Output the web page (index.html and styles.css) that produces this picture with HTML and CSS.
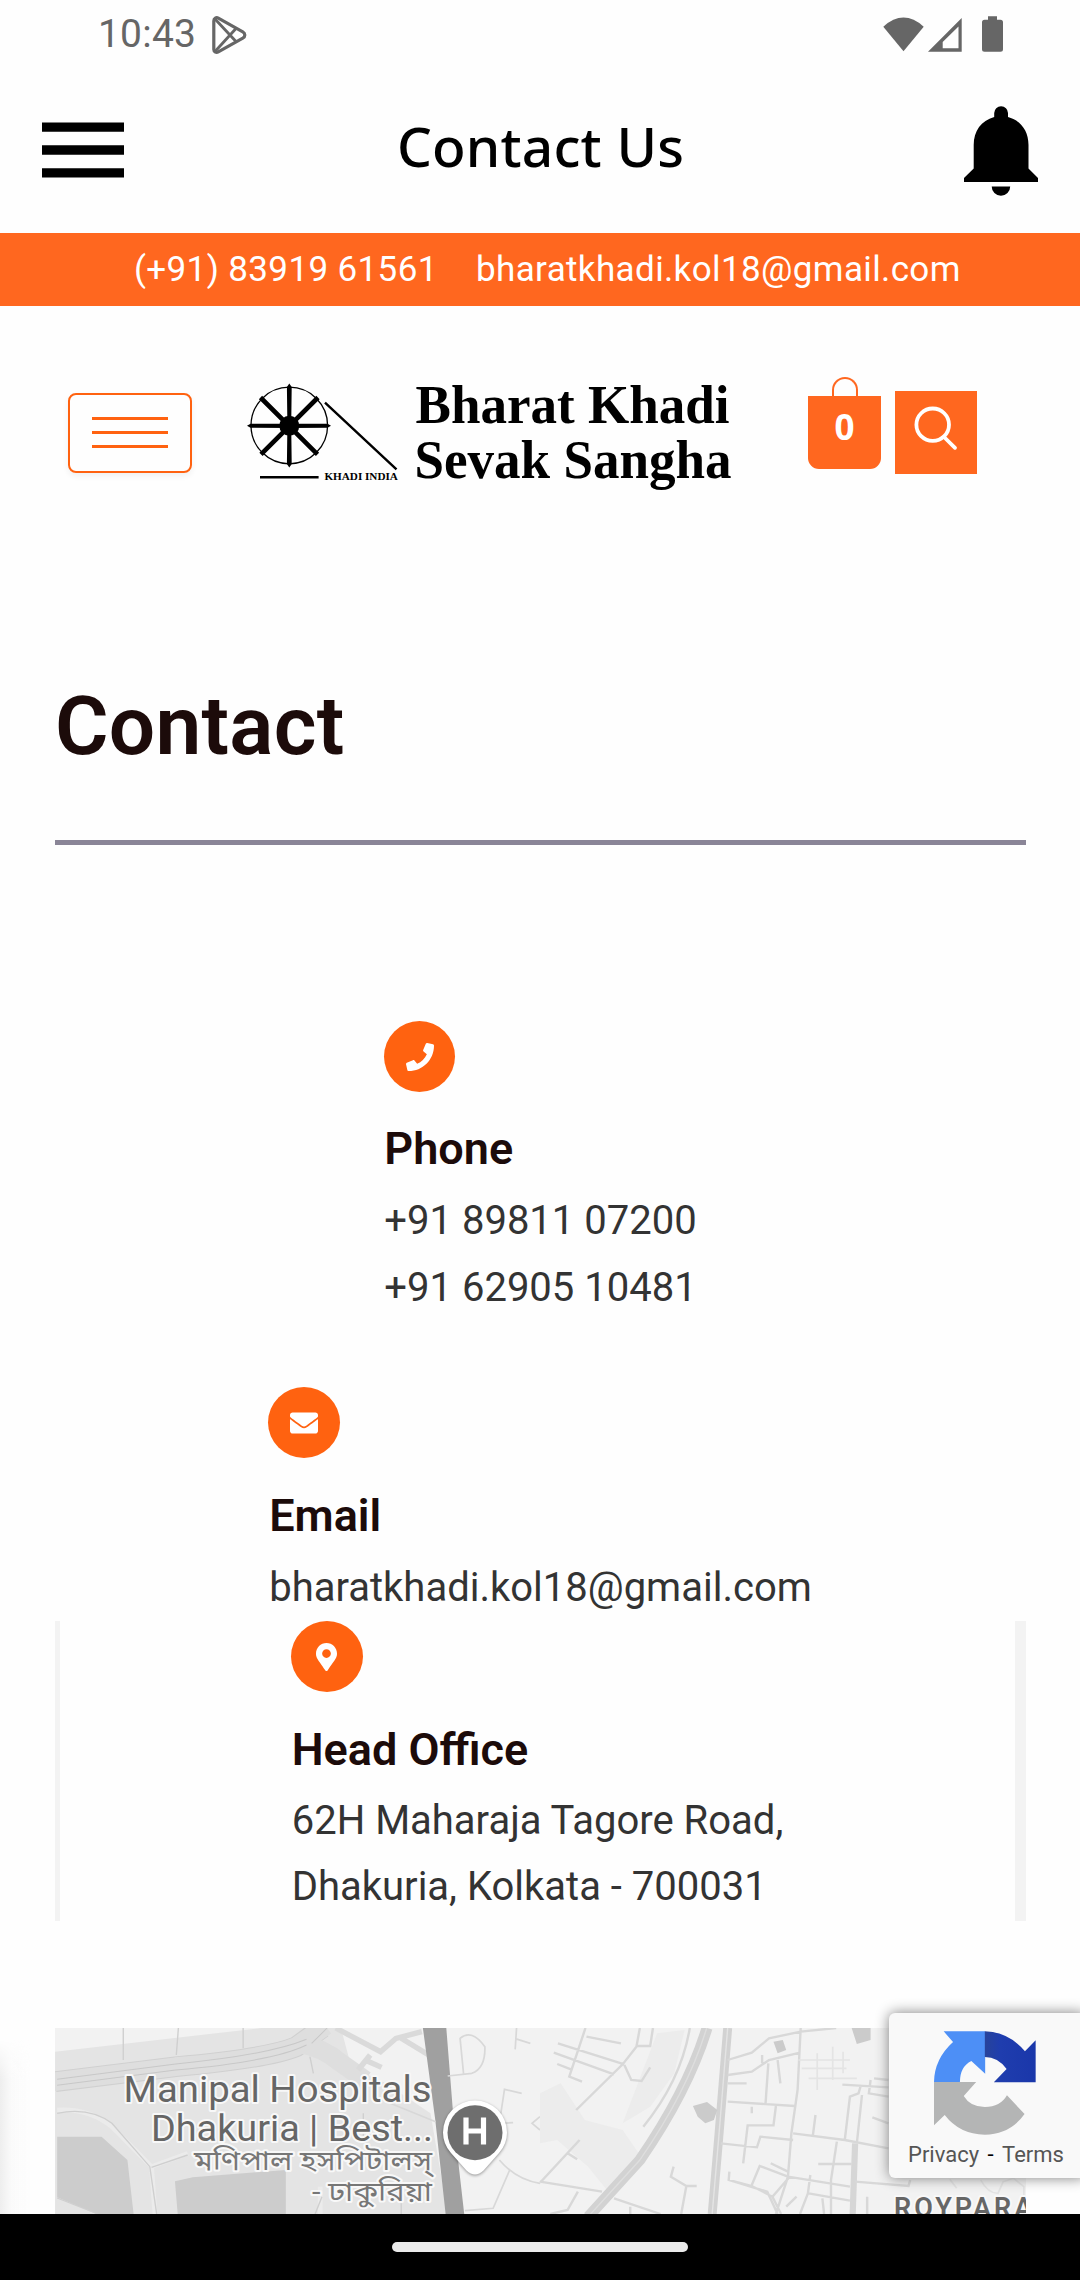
FILE: index.html
```html
<!DOCTYPE html>
<html lang="en">
<head>
<meta charset="utf-8">
<title>Contact Us</title>
<link rel="stylesheet" href="styles.css">
</head>
<body>
<div class="screen">
  <div class="status">
    <span class="time">10:43</span>
    <svg class="play" viewBox="212 16 35 38"><g fill="none" stroke="#666" stroke-width="3.2" stroke-linejoin="round"><path d="M213.800 21v28.500c0 2.500 2.500 3.500 4.500 2.400l24.500-13.700c2.700-1.600 2.700-4.800 0-6.400l-24.500-13.700c-2-1.100-4.500.2-4.500 2.900z"/><path d="M215 19L236 41.500M215 51.500L236 28.500" stroke-width="2.800"/></g></svg>
    <span class="grow"></span>
    <svg class="signals" viewBox="883 16 121 37" fill="#666"><path d="M883.300 26.700Q903.500 8.500 923.700 26.700L903.500 51.300z"/><path fill-rule="evenodd" d="M928 51.700L961.700 18v33.700zM942.700 48.300h15.800V26.600L942.700 42z"/><path d="M988 16.300h9v3.500h3.500a2.500 2.500 0 0 1 2.500 2.500v27a2.500 2.500 0 0 1-2.500 2.500h-16a2.500 2.500 0 0 1-2.500-2.500v-27a2.500 2.500 0 0 1 2.500-2.500h3.500z"/></svg>
  </div>
  <header class="appbar">
    <svg class="menu" viewBox="0 0 82 56"><path d="M0 .4h82v9.400H0zM0 23.300h82v9.400H0zM0 46.200h82v9.400H0z"/></svg>
    <h1 class="title">Contact Us</h1>
    <svg class="bell" viewBox="964 106 74 90"><path d="M994.200 117v-4a6.900 6.900 0 0 1 13.800 0v4c13 3.500 20.500 14 20.500 28v23.500l9.500 9.500v4h-74v-4l9.700-9.500V145c0-14 7.500-24.500 20.500-28zM991.700 186.500h18.500a9.250 9.250 0 0 1-18.500 0z"/></svg>
  </header>
  <div class="topline"><span class="tel">(+91) 83919 61561</span><span class="mail">bharatkhadi.kol18@gmail.com</span></div>
  <div class="brandbar">
    <div class="toggle"><i></i><i></i><i></i></div>
    <svg class="logo" viewBox="247 380 486 115">
      <circle cx="289.300" cy="425.500" r="38.300" fill="none" stroke="#000" stroke-width="1.300"/>
      <circle cx="289.300" cy="425.700" r="10"/>
      <path d="M286.900 387l2.400-3.500 2.400 3.500-.5 39h-3.800zM286.900 464l2.400 3.500 2.400-3.500-.5-39h-3.800zM250.500 423.700l-3.500 2 3.500 2 38.800.3v-4.600zM327.500 423.700l3.500 2-3.500 2-38.200.3v-4.600z"/>
      <g stroke="#000" stroke-width="4.600"><path d="M260.500 397.500l57 56.800M318 397.500l-57 56.800"/></g>
      <path d="M325 402.700L396.500 469.300M260 477.200h58.600" stroke="#000" stroke-width="2.400"/>
      <g font-family="'Liberation Serif',serif" font-weight="700"><text x="324.400" y="480" font-size="10.500" textLength="73.500" lengthAdjust="spacingAndGlyphs">KHADI INDIA</text>
      <text x="415.500" y="423" font-size="55" textLength="314" lengthAdjust="spacingAndGlyphs">Bharat Khadi</text>
      <text x="414.500" y="478" font-size="55" textLength="317" lengthAdjust="spacingAndGlyphs">Sevak Sangha</text></g>
    </svg>
    <div class="cart"><i class="handle"></i><span class="count">0</span></div>
    <div class="search"><svg viewBox="895 391 82 83"><g fill="none" stroke="#fff" stroke-width="3.800" stroke-linecap="round"><ellipse cx="932.700" cy="424.700" rx="16.300" ry="16.200"/><path d="M944.500 437.500L955 447.800"/></g></svg></div>
  </div>
  <main class="content">
    <h2 class="heading">Contact</h2>
    <hr class="rule">
    <section class="item phone">
      <div class="dot"><svg width="28" height="28" viewBox="0 0 512 512"><path d="M493.400 24.600l-104-24c-11.300-2.600-22.900 3.300-27.500 13.900l-48 112c-4.200 9.800-1.400 21.300 6.900 28l60.600 49.600c-36 76.700-98.900 140.500-177.200 177.200l-49.600-60.600c-6.800-8.300-18.200-11.100-28-6.900l-112 48C3.900 366.500-2 378.100.6 389.400l24 104C27.100 504.200 36.700 512 48 512c256.100 0 464-207.500 464-464 0-11.200-7.700-20.900-18.600-23.400z"/></svg></div>
      <h3>Phone</h3><p>+91 89811 07200<br>+91 62905 10481</p>
    </section>
    <section class="item email">
      <div class="dot"><svg width="28" height="28" viewBox="0 0 512 512"><path d="M502.300 190.800c3.900-3.100 9.700-.2 9.700 4.700V400c0 26.500-21.500 48-48 48H48c-26.500 0-48-21.500-48-48V195.600c0-5 5.700-7.800 9.700-4.700 22.400 17.400 52.100 39.500 154.100 113.600 21.100 15.400 56.700 47.800 92.200 47.600 35.700.3 72-32.800 92.300-47.600 102-74.100 131.600-96.300 154-113.700zM256 320c23.200.4 56.600-29.200 73.400-41.400 132.700-96.300 142.800-104.700 173.400-128.700 5.800-4.500 9.200-11.500 9.200-18.900v-19c0-26.500-21.500-48-48-48H48c-26.500 0-48 21.500-48 48v19c0 7.400 3.400 14.300 9.200 18.900 30.600 23.900 40.700 32.400 173.400 128.700 16.800 12.200 50.200 41.800 73.400 41.400z"/></svg></div>
      <h3>Email</h3><p>bharatkhadi.kol18@gmail.com</p>
    </section>
    <div class="office"><section class="item">
      <div class="dot"><svg width="21" height="28" viewBox="0 0 384 512"><path d="M172.300 501.700C27 291 0 269.400 0 192 0 86 86 0 192 0s192 86 192 192c0 77.400-27 99-172.300 309.700-9.500 13.800-29.900 13.800-39.500 0zM192 272c44.200 0 80-35.800 80-80s-35.800-80-80-80-80 35.800-80 80 35.800 80 80 80z"/></svg></div>
      <h3>Head Office</h3><p>62H Maharaja Tagore Road,<br>Dhakuria, Kolkata - 700031</p>
    </section></div>
    <svg class="map" viewBox="55 48 971 186">
      <rect x="55" y="48" width="971" height="186" fill="#f2f2f2"/>
      <g transform="scale(.34437 .33333)">
        <path fill="#e4e4e4" d="M160 215L760 144H990L1020 260 1120 310 1250 400 1300 702H160z"/>
        <path fill="#ccc" d="M166 470H295L370 540 388 702H280L166 652zM508 604L560 592 830 570V702H516z"/>
        <g fill="none" stroke="#ebebeb" stroke-width="14"><path d="M166 390Q260 385 325 440L440 560 450 702M440 560L545 520M930 702V620"/></g>
        <g fill="none" stroke="#cfcfcf" stroke-width="4"><path d="M166 400Q260 380 325 430L435 560 455 702M440 562L545 525M358 144V240M518 144L512 225M706 144V205M166 654L285 702M900 230L910 280M915 702L935 650M1055 400V480M1165 702V670"/></g>
        <path fill="none" stroke="#d0d0d0" stroke-width="62" d="M160 305L510 260Q780 235 860 200L935 144"/>
        <path fill="none" stroke="#dedede" stroke-width="56" d="M150 306L510 260Q780 235 860 200L945 138M870 190Q940 205 985 245L1060 300"/>
        <g fill="none" stroke="#c8c8c8" stroke-width="3"><path d="M166 298L510 252Q780 225 890 178M166 316L510 270Q790 245 890 195M905 190L950 144"/></g>
        <g fill="none" stroke="#dadada" stroke-width="16"><path d="M975 144L1105 215 1150 175 1225 155M1165 175L1245 225M1075 225L1040 270M1060 240L1108 262"/></g>
        <path fill="#a0a0a0" d="M1228 144H1296L1318 430 1348 702H1294L1264 420z"/>
        <g fill="none" stroke="#d8d8d8" stroke-width="5"><path d="M1300 288L1370 280Q1410 265 1408 200Q1370 145 1336 175L1346 280M1500 144L1496 208M1496 176L1540 190M1515 340L1465 328 1450 430 1490 428M1450 540Q1500 600 1568 610M1480 570L1432 685 1350 692M1568 410L1545 430 1568 450M1110 360L1265 425"/></g>
      </g>
      <g transform="translate(540 0) scale(.34437 .33333)">
        <g fill="#ececec"><path d="M0 340L60 310 130 420 240 450 300 540 210 650 140 560 50 480 0 490zM340 160L420 150 390 280 320 380 240 430z"/></g>
        <g fill="none" stroke="#d2d2d2" stroke-width="32"><path d="M485 144Q430 330 290 540L140 710"/></g>
        <path fill="none" stroke="#dedede" stroke-width="4" d="M484 144Q430 330 290 540L140 710"/>
        <path fill="none" stroke="#d2d2d2" stroke-width="26" d="M545 144L520 460 500 702"/>
        <path fill="none" stroke="#e4e4e4" stroke-width="4" d="M545 144L520 460 500 702"/>
        <path fill="none" stroke="#d6d6d6" stroke-width="18" d="M915 490L908 702"/>
        <g fill="none" stroke="#d8d8d8" stroke-width="7"><path d="M132 144L85 290 122 305M135 170L235 190M52 190L245 253M40 218L215 283M50 252L90 268M290 144L280 200 240 253 105 390M280 198H320L328 144M245 255L265 300 295 303 320 262M435 144Q410 300 300 440M115 480L0 608M80 520L108 538M0 605L180 635M110 635L80 690 30 702M215 655L350 702M262 680V702M388 560L380 590 425 618H455M425 618L410 702M545 240L615 218 665 175 757 155 860 144M545 285L615 275 665 240 755 218M757 144L748 330 730 460 720 590 685 702M545 310H600M663 250L655 370M690 240L698 310M645 225V250M545 365L740 378M615 380V400M525 490L630 502 640 470 735 480M590 550L603 436H678L685 378M735 460L885 480 1012 505M800 405L792 470M885 480L900 350 925 340 932 315M878 314L1012 322M960 300L955 340 1012 350M970 295L1012 300M965 412L1012 430M935 345L920 490M862 485L845 600V702M808 552H905M550 575L548 600 615 618 675 650 725 590M615 615L638 558 720 590M670 550L720 575M548 600L660 635 690 702M675 650L700 702M715 680L745 650M785 585L778 640 755 702M720 590L900 620M780 640L900 662M820 655L825 702M915 605L1070 618 1075 600M950 650V702"/></g>
        <g fill="none" stroke="#e4e4e4" stroke-width="5"><path d="M750 240H900M760 265H890M780 295H920M805 220V330M850 200V300M880 215V280M1190 598L1210 625M1280 600Q1300 640 1330 640L1345 605 1375 595 1405 620V650"/></g>
        <g fill="#cbcbcb"><path d="M905 144H960V180L920 192zM678 185L705 180 715 210 690 220zM444 378L485 366 515 390 505 420 480 430 458 410z"/></g>
      </g>
      <g class="maptext" fill="#666" stroke="#f8f8f8" stroke-width="4" paint-order="stroke" stroke-linejoin="round">
        <text x="123.500" y="122" font-size="37" textLength="308" lengthAdjust="spacingAndGlyphs">Manipal Hospitals</text>
        <text x="151" y="160.500" font-size="37" textLength="282" lengthAdjust="spacingAndGlyphs">Dhakuria | Best...</text>
        <text x="194" y="190" font-size="27" fill="#777" textLength="238" lengthAdjust="spacingAndGlyphs">মণিপাল হসপিটালস্</text>
        <text x="312" y="220.500" font-size="27" fill="#777" textLength="120" lengthAdjust="spacingAndGlyphs">- ঢাকুরিয়া</text>
        <text x="894" y="236.500" font-size="27" font-weight="600" letter-spacing="3">ROYPARA</text>
      </g>
      <path class="pin" d="M443 152.500a32 32 0 1 1 64 0Q507 164 499 173L483.500 190.500Q475 198.500 466.500 190.500L451 173Q443 164 443 152.500z"/>
      <circle cx="475" cy="152.700" r="27.500" fill="#6e6e6e"/>
      <path d="M466 137.500v27M483.500 137.500v27M466 151h17" stroke="#fff" stroke-width="5.200"/>
    </svg>
  </main>
  <footer class="nav"><i></i></footer>
  <div class="edge"></div>
  <aside class="captcha">
    <svg viewBox="1145 153 295 312" preserveAspectRatio="none"><defs><linearGradient id="b"><stop stop-color="#28439a"/><stop offset=".3" stop-color="#1f3dae"/><stop offset="1" stop-color="#1a37aa"/></linearGradient></defs>
      <path fill="#4d8ff6" d="M1173 154H1293V281L1253 243Q1220 260 1220 306H1145Q1146 237 1200 186z"/><path fill="url(#b)" d="M1292 154Q1362 156 1408 214L1439 181V307H1318L1355 267Q1330 231 1292 231z"/><path fill="#b4b5b5" d="M1145 306H1267L1231 348Q1250 381 1292 381 1337 381 1356 346L1407 402Q1365 463 1292 464 1219 463 1176 405L1145 436z"/></svg>
    <div class="links"><span>Privacy</span><b>-</b><span>Terms</span></div>
  </aside>
</div>
</body>
</html>
```
FILE: styles.css
```css
* { box-sizing: border-box; }
body { margin: 0; background: #fff; font-family: Roboto, "Noto Sans", sans-serif; }
h1, h2, h3, p { margin: 0; }
svg { display: block; }
.screen { position: relative; width: 1080px; height: 2280px; overflow: hidden; display: flex; flex-direction: column; background: #fefefe; }
.status { height: 68px; display: flex; align-items: flex-start; padding: 0 76px 0 98px; color: #666; }
.time { font-size: 39px; line-height: 68px; width: 114px; letter-spacing: .2px; }
.play { width: 35px; height: 38px; margin-top: 16px; }
.grow { flex: 1; }
.signals { width: 121px; height: 37px; margin-top: 16px; }
.appbar { height: 165px; display: flex; align-items: flex-start; justify-content: space-between; padding: 0 42px; }
.menu { width: 82px; height: 56px; margin-top: 54px; }
.title { font: 500 55px/80px "Noto Sans", sans-serif; margin: 38px 7px 0 0; letter-spacing: .2px; color: #000; }
.bell { width: 74px; height: 90px; margin-top: 38px; }
.topline { height: 73px; background: #ff671f; color: #fff; display: flex; padding-left: 134px; font-size: 35px; line-height: 73px; letter-spacing: .37px; white-space: nowrap; }
.tel { width: 342px; }
.brandbar { height: 334px; display: flex; align-items: flex-start; padding: 71px 0 0 68px; }
.toggle { width: 124px; height: 80px; margin-top: 16px; border: 2px solid #ff6210; border-radius: 8px; display: flex; flex-direction: column; align-items: center; padding-top: 22px; gap: 11px; box-shadow: 0 3px 6px rgba(0,0,0,.06); }
.toggle i { width: 76px; height: 3px; background: #ff6210; }
.logo { width: 486px; height: 115px; margin: 3px 0 0 55px; overflow: visible; }
.cart { width: 73px; margin-left: 75px; display: flex; flex-direction: column; align-items: center; }
.handle { width: 26px; height: 19px; border: 2px solid #ff671f; border-bottom: 0; border-radius: 13px 13px 0 0; }
.count { width: 73px; height: 73px; background: #ff671f; border-radius: 0 0 11px 11px; color: #fff; font: 700 35px/62px "Noto Sans", sans-serif; text-align: center; }
.search { width: 82px; height: 83px; margin: 14px 0 0 14px; background: #ff671f; }
.content { height: 1574px; padding: 41px 54px 0 55px; display: flex; flex-direction: column; align-items: center; }
.heading { align-self: flex-start; color: #1c0b0a; font-weight: 600; font-size: 82px; line-height: 90px; height: 159px; letter-spacing: .25px; }
.rule { width: 971px; height: 5px; flex: none; margin: 0; border: 0; background: #8a8597; }
.item { width: max-content; }
.phone { margin-top: 176px; }
.email { margin-top: 66px; }
.email h3, .office h3 { margin-top: 28px; }
.email p { margin-bottom: -1px; }
.dot { width: 71px; height: 71px; border-radius: 50%; background: #ff6210; display: flex; align-items: center; justify-content: center; fill: #fff; }
.email .dot, .office .dot { margin-left: -1px; width: 72px; }
.item h3 { color: #1c0b0a; font-size: 45px; font-weight: 600; line-height: 60px; margin-bottom: 8px; }
.phone h3 { margin-top: 27px; }
.item p { color: #333; font-size: 40px; line-height: 67px; }
.office p { line-height: 66px; }
.office { width: 971px; height: 300px; border: solid #f3f3f3; border-width: 0 11px 0 5px; display: flex; justify-content: center; flex: none; margin-top: 1px; }
.map { width: 971px; height: 186px; flex: none; margin-top: 107px; }
.maptext { font-family: Roboto, "Noto Sans", "Noto Sans Bengali", sans-serif; }
.pin { fill: #fff; filter: drop-shadow(0 1px 1.5px rgba(0,0,0,.4)); }
.nav { height: 66px; background: #000; display: flex; justify-content: center; align-items: flex-start; padding-top: 28px; flex: none; }
.nav i { width: 296px; height: 10px; border-radius: 5px; background: #ebebeb; }
.edge { position: absolute; left: 0; top: 2040px; width: 32px; height: 174px; background: linear-gradient(90deg, #eee, #fafafa 35%, rgba(254,254,254,0)); -webkit-mask-image: linear-gradient(transparent, #000 40px); mask-image: linear-gradient(transparent, #000 40px); }
.captcha { position: absolute; left: 889px; top: 2013px; width: 197px; height: 165px; background: #f9f9f9; border-radius: 6px; box-shadow: 0 0 14px #808080; padding: 18px 0 0 45px; }
.captcha svg { width: 102px; height: 104px; }
.links { margin-left: -26px; display: flex; font-size: 22px; line-height: 39px; color: #555; }
.links b { width: 23px; text-align: center; color: #000; font-weight: 400; }
```
